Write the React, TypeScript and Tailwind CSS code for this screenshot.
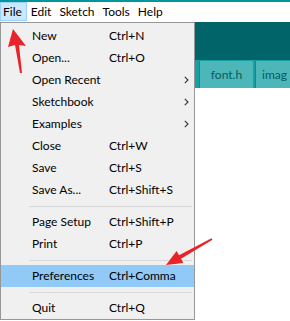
import React from 'react';

type Item = { label: string; shortcut?: string; sub?: boolean; active?: boolean } | 'sep';

const items: Item[] = [
  { label: 'New', shortcut: 'Ctrl+N' },
  { label: 'Open...', shortcut: 'Ctrl+O' },
  { label: 'Open Recent', sub: true },
  { label: 'Sketchbook', sub: true },
  { label: 'Examples', sub: true },
  { label: 'Close', shortcut: 'Ctrl+W' },
  { label: 'Save', shortcut: 'Ctrl+S' },
  { label: 'Save As...', shortcut: 'Ctrl+Shift+S' },
  'sep',
  { label: 'Page Setup', shortcut: 'Ctrl+Shift+P' },
  { label: 'Print', shortcut: 'Ctrl+P' },
  'sep',
  { label: 'Preferences', shortcut: 'Ctrl+Comma', active: true },
  'sep',
  { label: 'Quit', shortcut: 'Ctrl+Q' },
];

const menus = ['File', 'Edit', 'Sketch', 'Tools', 'Help'];

export default function App() {
  return (
    <div
      className="relative w-[290px] h-[321px] overflow-hidden bg-white text-[12px] text-black"
      style={{ fontFamily: 'Lato, "Noto Sans", sans-serif' }}
    >
      {/* window top strip */}
      <div className="h-[2px] bg-[#00979c]" />

      {/* menu bar */}
      <div className="flex h-[19px] items-center bg-white">
        {menus.map((m, i) => (
          <div
            key={m}
            className={
              i === 0
                ? 'h-full flex items-center pl-[2px] pr-[4px] bg-[#cce8ff] border border-[#99d1ff]'
                : 'h-full flex items-center px-[4px]'
            }
          >
            {m}
          </div>
        ))}
      </div>
      <div className="h-[1px] bg-white" />

      <div className="flex">
        {/* dropdown */}
        <div className="w-[195px] bg-[#f0f0f0] border border-[#979797] pt-[2px] pb-0">
          {items.map((it, i) =>
            it === 'sep' ? (
              <div key={i} className="h-[10px] flex items-center pl-[28px] pr-[2px]">
                <div className="h-[1px] w-full bg-[#d7d7d7]" />
              </div>
            ) : (
              <div
                key={i}
                className={
                  'h-[22px] flex items-center pl-[31px] pr-[4px] ' + (it.active ? 'bg-[#91c9f7]' : '')
                }
              >
                <span className="w-[77px] whitespace-nowrap">{it.label}</span>
                <span className="flex-1 whitespace-nowrap">{it.shortcut}</span>
                {it.sub && (
                  <svg width="5" height="8" viewBox="0 0 5 8" className="mr-[1px]">
                    <path d="M0.8 0.8 L4 4 L0.8 7.2" fill="none" stroke="#333" strokeWidth="1.1" />
                  </svg>
                )}
              </div>
            )
          )}
        </div>

        {/* editor area */}
        <div className="flex-1 flex flex-col min-w-0">
          <div className="h-[38px] bg-[#006468]" />
          <div className="h-[28px] bg-[#17a1a5] flex items-end pl-[4px] gap-[2px] overflow-hidden">
            <div className="h-[27px] w-[54px] shrink-0 bg-[#4db6b9] flex items-center justify-center text-[#005c5f] border-l border-[#138a8e]">
              font.h
            </div>
            <div className="h-[27px] w-[40px] shrink-0 bg-[#4db6b9] flex items-center pl-[6px] text-[#005c5f] border-l border-[#138a8e] whitespace-nowrap overflow-hidden">
              imag
            </div>
          </div>
          <div className="flex-1 bg-white" />
        </div>
      </div>

      {/* annotation arrows */}
      <svg className="absolute inset-0" width="290" height="321" viewBox="0 0 290 321">
        <polygon
          points="13,29 26,46 19,45 22,73 20,73 15,45 8,47"
          fill="#e8242a"
        />
        <polygon
          points="212.5,239.8 211.5,238.2 179,255.3 176.6,250.9 166,265 183.4,263.1 181,258.7"
          fill="#e8242a"
        />
      </svg>
    </div>
  );
}
